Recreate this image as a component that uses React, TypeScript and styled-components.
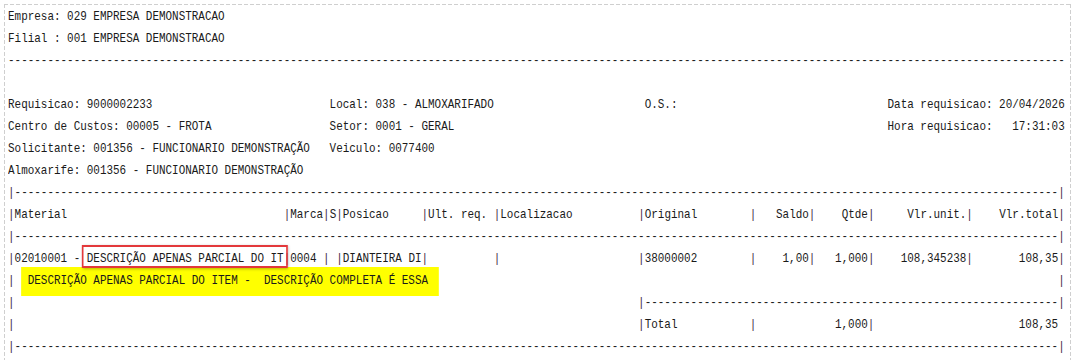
import React from "react";
import styled, { createGlobalStyle } from "styled-components";

// the report is a fixed 161 column text print
const COLS = 161;

type Mark = "box" | "highlight";
type Seg = { at: number; text: string; mark?: Mark };

const dashes = (n: number) => "-".repeat(n);
const rule = "|" + dashes(COLS - 2) + "|";

const lines: Seg[][] = [
  [{ at: 0, text: "Empresa: 029 EMPRESA DEMONSTRACAO" }],
  [{ at: 0, text: "Filial : 001 EMPRESA DEMONSTRACAO" }],
  [{ at: 0, text: dashes(COLS) }],
  [],
  [
    { at: 0, text: "Requisicao: 9000002233" },
    { at: 49, text: "Local: 038 - ALMOXARIFADO" },
    { at: 97, text: "O.S.:" },
    { at: 134, text: "Data requisicao: 20/04/2026" },
  ],
  [
    { at: 0, text: "Centro de Custos: 00005 - FROTA" },
    { at: 49, text: "Setor: 0001 - GERAL" },
    { at: 134, text: "Hora requisicao:   17:31:03" },
  ],
  [
    { at: 0, text: "Solicitante: 001356 - FUNCIONARIO DEMONSTRAÇÃO" },
    { at: 49, text: "Veiculo: 0077400" },
  ],
  [{ at: 0, text: "Almoxarife: 001356 - FUNCIONARIO DEMONSTRAÇÃO" }],
  [{ at: 0, text: rule }],
  [
    { at: 0, text: "|Material" },
    { at: 42, text: "|Marca|S|Posicao" },
    { at: 63, text: "|Ult. req." },
    { at: 74, text: "|Localizacao" },
    { at: 96, text: "|Original" },
    { at: 113, text: "|" },
    { at: 117, text: "Saldo|" },
    { at: 127, text: "Qtde|" },
    { at: 137, text: "Vlr.unit.|" },
    { at: 151, text: "Vlr.total|" },
  ],
  [{ at: 0, text: rule }],
  [
    { at: 0, text: "|02010001 - " },
    { at: 12, text: "DESCRIÇÃO APENAS PARCIAL DO IT", mark: "box" },
    { at: 42, text: "|0004 | |DIANTEIRA DI|" },
    { at: 74, text: "|" },
    { at: 96, text: "|38000002" },
    { at: 113, text: "|" },
    { at: 118, text: "1,00|" },
    { at: 126, text: "1,000|" },
    { at: 136, text: "108,345238|" },
    { at: 154, text: "108,35|" },
  ],
  [
    { at: 0, text: "|" },
    {
      at: 3,
      text: "DESCRIÇÃO APENAS PARCIAL DO ITEM -  DESCRIÇÃO COMPLETA É ESSA",
      mark: "highlight",
    },
    { at: 160, text: "|" },
  ],
  [
    { at: 0, text: "|" },
    { at: 96, text: "|" + dashes(63) + "|" },
  ],
  [
    { at: 0, text: "|" },
    { at: 96, text: "|Total" },
    { at: 113, text: "|" },
    { at: 126, text: "1,000|" },
    { at: 154, text: "108,35" },
  ],
  [{ at: 0, text: rule }],
];

function withPipes(text: string, key: string) {
  return text.split(/(\|)/).map((part, i) =>
    part === "|" ? <Pipe key={`${key}-${i}`}>|</Pipe> : part
  );
}

function renderLine(segs: Seg[], row: number) {
  const out: React.ReactNode[] = [];
  let col = 0;
  segs.forEach((seg, i) => {
    if (seg.at > col) out.push(" ".repeat(seg.at - col));
    const key = `${row}-${i}`;
    const content = withPipes(seg.text, key);
    if (seg.mark === "box") out.push(<Boxed key={key}>{content}</Boxed>);
    else if (seg.mark === "highlight")
      out.push(<Highlight key={key}>{content}</Highlight>);
    else out.push(...content);
    col = seg.at + seg.text.length;
  });
  return out;
}

export default function App() {
  return (
    <>
      <GlobalStyle />
      <Page>
        <Report>
          {lines.map((segs, i) => (
            <Line key={i}>{renderLine(segs, i)}</Line>
          ))}
        </Report>
      </Page>
    </>
  );
}

const GlobalStyle = createGlobalStyle`
  html, body {
    margin: 0;
    background: #ffffff;
    overflow: hidden;
  }
`;

const dash = (dir: string) =>
  `repeating-linear-gradient(${dir}, #cfcfcf 0 4px, transparent 4px 6px)`;

const Page = styled.div`
  box-sizing: border-box;
  margin: 4px 0 0 4px;
  width: 1067px;
  height: 356px;
  overflow: hidden;
  padding: 2px 0 0 4px;
  background: ${dash("90deg")} top left / 100% 1px no-repeat,
    ${dash("180deg")} top left / 1px 100% no-repeat,
    ${dash("180deg")} top right / 1px 100% no-repeat;
`;

// Liberation Mono at 13.33px gives an 8px pitch; squeeze it to the
// narrow print font of the original (about 6.56px per column)
const Report = styled.div`
  width: ${COLS * 8}px;
  font-family: "Liberation Mono", "DejaVu Sans Mono", monospace;
  font-size: 13.3333px;
  color: #1a1a1a;
  transform: scaleX(0.8206);
  transform-origin: 0 0;
`;

const Line = styled.div`
  height: 22px;
  line-height: 22px;
  white-space: pre;
`;

const Pipe = styled.span`
  color: #3e1f45;
`;

const Boxed = styled.span`
  position: relative;
  padding: 4px 3px 0 4px;
  margin: 0 -5px 0 -6px;
  border: 2px solid #e3383b;
  box-shadow: 1px 1px 3px rgba(0, 0, 0, 0.3);
`;

const Highlight = styled.span`
  padding: 6px 13px 8px 8px;
  margin: 0 -13px 0 -8px;
  background: #ffff00;
`;
